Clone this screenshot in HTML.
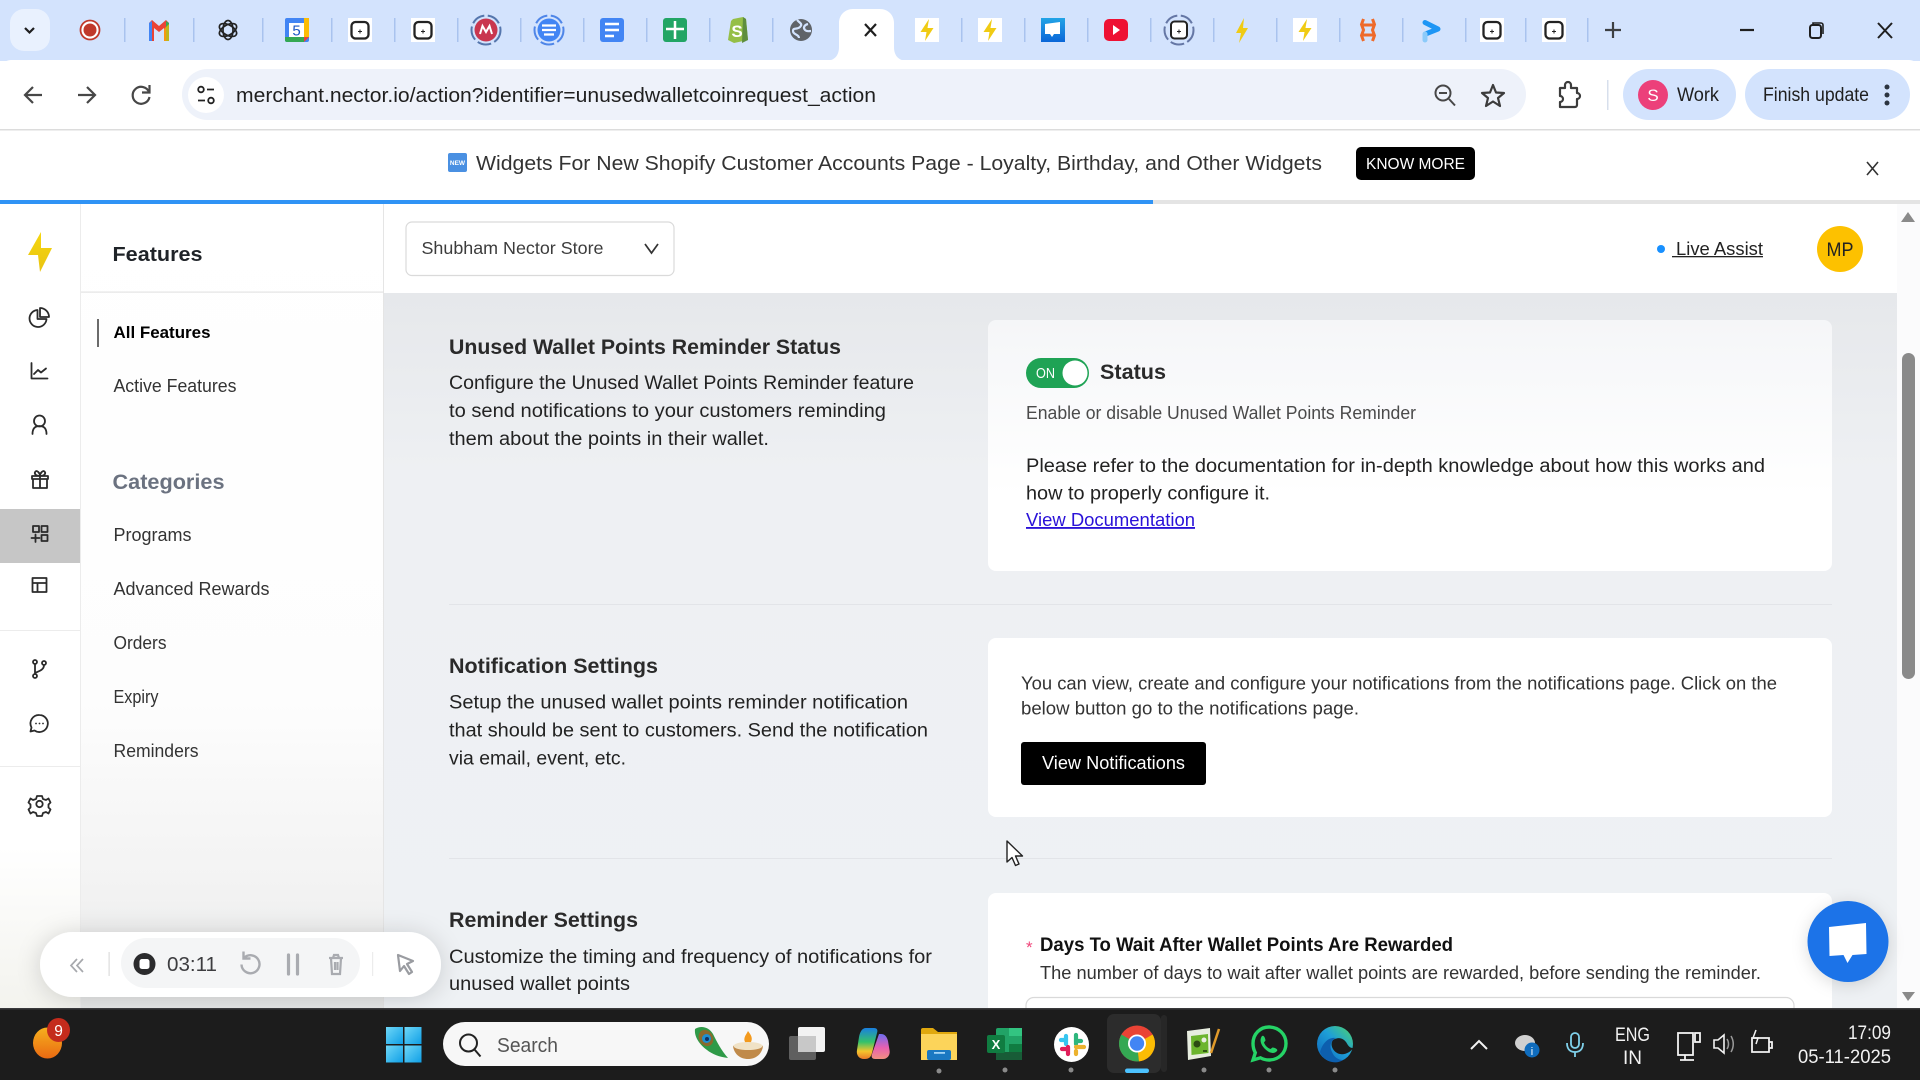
<!DOCTYPE html>
<html><head><meta charset="utf-8"><title>Nector</title>
<style>
html,body{margin:0;padding:0;width:1920px;height:1080px;overflow:hidden;background:#fff}
svg{display:block}
text{font-family:"Liberation Sans",sans-serif;white-space:pre}
.p{font-size:19px;fill:#222}
.h{font-size:21px;font-weight:700;fill:#2a2a2a}
.n{font-size:18px;fill:#333}
.l{font-size:18px;fill:#4a4a4a}
.ic{fill:none;stroke:#2b2b2b;stroke-width:1.8;stroke-linecap:round;stroke-linejoin:round}
.sep{fill:#a9c3ee}
.dot{fill:#8a8a8a}
</style></head><body>
<svg width="1920" height="1080" viewBox="0 0 1920 1080" xmlns="http://www.w3.org/2000/svg">
<defs>
<linearGradient id="mainBg" x1="0" y1="0" x2="0" y2="1"><stop offset="0" stop-color="#e6e8eb"/><stop offset=".25" stop-color="#eef0f3"/><stop offset="1" stop-color="#eef1f4"/></linearGradient>
<linearGradient id="cardBg" x1="0" y1="0" x2="0" y2="1"><stop offset="0" stop-color="#f5f6f8"/><stop offset=".7" stop-color="#fff"/></linearGradient>
<linearGradient id="panelBg" x1="0" y1="0" x2="0" y2="1"><stop offset="0" stop-color="#fff"/><stop offset=".62" stop-color="#fdfdfd"/><stop offset=".86" stop-color="#f2f2f2"/><stop offset="1" stop-color="#e6e7e7"/></linearGradient>
<linearGradient id="railBg" x1="0" y1="0" x2="0" y2="1"><stop offset="0" stop-color="#fff"/><stop offset=".8" stop-color="#fff"/><stop offset="1" stop-color="#f3f3ee"/></linearGradient>
<linearGradient id="bolt" x1="0" y1="0" x2="0" y2="1"><stop offset="0" stop-color="#f5d60f"/><stop offset="1" stop-color="#e9c412"/></linearGradient>
<linearGradient id="msg" x1="0" y1="0" x2="0" y2="1"><stop offset="0" stop-color="#23a4e6"/><stop offset="1" stop-color="#0a66d8"/></linearGradient>
<linearGradient id="win" x1="0" y1="0" x2="1" y2="1"><stop offset="0" stop-color="#6fd7f7"/><stop offset="1" stop-color="#0f9fe6"/></linearGradient>
<linearGradient id="org" x1="0" y1="0" x2="0" y2="1"><stop offset="0" stop-color="#f6b01e"/><stop offset="1" stop-color="#ea6a12"/></linearGradient>
<linearGradient id="copL" x1="0" y1="0" x2="0" y2="1"><stop offset="0" stop-color="#1a7fe0"/><stop offset=".45" stop-color="#34c26a"/><stop offset=".75" stop-color="#f5c52c"/><stop offset="1" stop-color="#ea7a2a"/></linearGradient>
<linearGradient id="copR" x1="0" y1="0" x2="0" y2="1"><stop offset="0" stop-color="#6c6cf0"/><stop offset=".55" stop-color="#e860b0"/><stop offset="1" stop-color="#f09080"/></linearGradient>
<linearGradient id="edge" x1="1" y1="0" x2="0" y2="1"><stop offset="0" stop-color="#4fd46a"/><stop offset=".45" stop-color="#1e9fd8"/><stop offset="1" stop-color="#0d62b8"/></linearGradient>
<filter id="sh" x="-20%" y="-40%" width="140%" height="180%"><feDropShadow dx="0" dy="2" stdDeviation="12" flood-color="#000" flood-opacity=".16"/></filter>
<filter id="sh2" x="-30%" y="-30%" width="160%" height="160%"><feDropShadow dx="0" dy="3" stdDeviation="8" flood-color="#000" flood-opacity=".14"/></filter>
<g id="tile"><rect x="-12" y="-12" width="24" height="24" fill="#fff"/><rect x="-8.500" y="-8" width="17" height="16.500" rx="4" fill="none" stroke="#222" stroke-width="2.300"/><path d="M-2 1.500H2M0-.5v4" stroke="#222" stroke-width="1"/></g>
<g id="boltT"><rect x="-12" y="-12" width="24" height="24" fill="#fff"/><path d="M2-11-6.500 2H-.5L-2 11 6.500-2H.5z" fill="#f0cb13"/></g>
</defs>

<!-- Tab strip -->
<rect width="1920" height="61" fill="#d3e3fd"/>
<rect x="10" y="9" width="40" height="42" rx="14" fill="#e9f1fe"/>
<path d="M25 28l4.500 4.500 4.500-4.500" fill="none" stroke="#1f1f1f" stroke-width="2.200"/>
<g class="sep">
<rect x="124" y="18" width="1.500" height="24"/><rect x="193" y="18" width="1.500" height="24"/><rect x="262" y="18" width="1.500" height="24"/><rect x="331" y="18" width="1.500" height="24"/><rect x="394" y="18" width="1.500" height="24"/><rect x="457" y="18" width="1.500" height="24"/><rect x="520" y="18" width="1.500" height="24"/><rect x="583" y="18" width="1.500" height="24"/><rect x="646" y="18" width="1.500" height="24"/><rect x="709" y="18" width="1.500" height="24"/><rect x="772" y="18" width="1.500" height="24"/>
<rect x="961" y="18" width="1.500" height="24"/><rect x="1024" y="18" width="1.500" height="24"/><rect x="1087" y="18" width="1.500" height="24"/><rect x="1150" y="18" width="1.500" height="24"/><rect x="1213" y="18" width="1.500" height="24"/><rect x="1276" y="18" width="1.500" height="24"/><rect x="1339" y="18" width="1.500" height="24"/><rect x="1402" y="18" width="1.500" height="24"/><rect x="1465" y="18" width="1.500" height="24"/><rect x="1525" y="18" width="1.500" height="24"/><rect x="1587" y="18" width="1.500" height="24"/>
</g>
<!-- record -->
<circle cx="90" cy="30" r="9.500" fill="#fff" stroke="#c0392b" stroke-width="1.800"/><circle cx="90" cy="30" r="6.500" fill="#c0392b"/>
<!-- gmail -->
<path d="M149 41V23l3-3 7 6 7-6 3 3v18h-5V28l-5 4-5-4v13z" fill="#ea4335"/><path d="M149 41V23l3-2v20z" fill="#4285f4"/><path d="M169 41V23l-3-2v20z" fill="#34a853"/><path d="M164 41V29l5-5v17z" fill="#fbbc04" opacity=".7"/>
<!-- chatgpt -->
<g fill="none" stroke="#222" stroke-width="1.700"><ellipse cx="228" cy="30" rx="5" ry="9.500"/><ellipse cx="228" cy="30" rx="5" ry="9.500" transform="rotate(60 228 30)"/><ellipse cx="228" cy="30" rx="5" ry="9.500" transform="rotate(120 228 30)"/></g>
<!-- calendar -->
<rect x="285" y="18" width="24" height="24" rx="2" fill="#4285f4"/><rect x="289" y="23" width="15" height="14" fill="#fff"/><path d="M304 18h5v19h-5z" fill="#fbbc04"/><path d="M285 37h19v5h-17a2 2 0 0 1-2-2z" fill="#34a853"/><path d="M304 37h5l-5 5z" fill="#ea4335"/><text x="296.500" y="35.500" font-size="15" text-anchor="middle" fill="#1a56c4">5</text>
<use href="#tile" x="360" y="30"/><use href="#tile" x="423" y="30"/>
<!-- record circle -->
<circle cx="486" cy="30" r="14.500" fill="none" stroke="#5576ad" stroke-width="2" stroke-dasharray="14 3.500"/><circle cx="486" cy="30" r="11.500" fill="#c9364f"/><path d="M480 34l2.500-8 3.500 6 3.500-6 2.500 8" fill="none" stroke="#fff" stroke-width="2"/>
<circle cx="549" cy="30" r="14.500" fill="none" stroke="#4f86e8" stroke-width="2" stroke-dasharray="14 3.500"/><circle cx="549" cy="30" r="11.500" fill="#4285f4"/><path d="M542 25.500h14M542 30h14M544 34.500h10" stroke="#fff" stroke-width="2.200"/>
<rect x="600" y="18" width="24" height="24" rx="3" fill="#4285f4"/><path d="M605 24h14M605 30h14M605 36h9" stroke="#fff" stroke-width="2.500"/>
<rect x="663" y="18" width="24" height="24" rx="3" fill="#22a565"/><path d="M666 29h18M675 21v18" stroke="#fff" stroke-width="2.500"/>
<path d="M733 19l10-2 3 2 2 21-14 3-6-3 3-19z" fill="#95bf47"/><path d="M743 17l3 2 2 21-6 3z" fill="#5e8e3e"/><text x="737" y="37" font-size="17" font-weight="700" fill="#fff" text-anchor="middle">S</text>
<circle cx="801" cy="30" r="11" fill="#5f6368"/><path d="M797 20c3 3 6 4 3 7s-7 0-7 4 6 3 6 7M808 24c-4 1-5 4-3 6s4 1 6 1" fill="none" stroke="#d3e3fd" stroke-width="2.200"/>
<!-- active tab -->
<path d="M825 61c8 0 14-4 14-14V23c0-8 6-14 14-14h27c8 0 14 6 14 14v24c0 10 6 14 14 14z" fill="#fff"/>
<path d="M865 24l11 12M876 24l-11 12" stroke="#1f1f1f" stroke-width="2.200"/>
<use href="#boltT" x="927" y="30"/><use href="#boltT" x="990" y="30"/>
<rect x="1041" y="18" width="24" height="24" fill="url(#msg)"/><path d="M1045 24l15-2v12h-6l-2 3-2-3h-5z" fill="#fff"/>
<rect x="1104" y="19" width="24" height="22" rx="5" fill="#ee1133"/><path d="M1113 25l7 5-7 5z" fill="#fff"/>
<circle cx="1179" cy="30" r="14.500" fill="none" stroke="#6577a5" stroke-width="2" stroke-dasharray="14 3.500"/><rect x="1171" y="21.500" width="16" height="17" rx="3.500" fill="#fff" stroke="#222" stroke-width="2"/><path d="M1177 31.500h4M1179 29.500v4" stroke="#222" stroke-width="1"/>
<path d="M1244 18l-8 15h5l-2 10 9-15h-5z" fill="#f0cb13"/>
<use href="#boltT" x="1305" y="30"/>
<g fill="none" stroke="#ee6a2a" stroke-width="3"><path d="M1363.500 19l-2 5.500 2 5.500-2 5.500 2 5.500M1372.500 19l2 5.500-2 5.500 2 5.500-2 5.500M1363 25h10M1363 35h10"/></g>
<path d="M1425 22.500l13 6.500-12.500 5" fill="none" stroke="#1e96f5" stroke-width="5" stroke-linecap="round" stroke-linejoin="round"/><path d="M1425 34v6" stroke="#8ccbfa" stroke-width="5" stroke-linecap="round"/>
<use href="#tile" x="1492" y="30"/><use href="#tile" x="1554" y="30"/>
<path d="M1605 30h16M1613 22v16" stroke="#3d4043" stroke-width="2.200"/>
<path d="M1740 30h14" stroke="#1f1f1f" stroke-width="2.200"/>
<rect x="1810" y="25" width="11" height="13" rx="2.500" fill="none" stroke="#1f1f1f" stroke-width="2"/><path d="M1813 24v-1h8a2 2 0 0 1 2 2v9" fill="none" stroke="#1f1f1f" stroke-width="1.600"/>
<path d="M1878 23l14 15M1892 23l-14 15" stroke="#1f1f1f" stroke-width="2"/>

<!-- Toolbar -->
<path d="M0 129V71a11 11 0 0 1 11-11h1898a11 11 0 0 1 11 11v58z" fill="#fff"/>
<rect y="129" width="1920" height="1.500" fill="#dcdcdc"/>
<path d="M42 95H26M33 87l-8 8 8 8" fill="none" stroke="#474747" stroke-width="2.200"/>
<path d="M78 95h16M87 87l8 8-8 8" fill="none" stroke="#474747" stroke-width="2.200"/>
<path d="M149 92a8.500 8.500 0 1 0 .5 5M149.500 85v7.500H142" fill="none" stroke="#474747" stroke-width="2.200"/>
<rect x="182" y="69" width="1344" height="51" rx="25.500" fill="#eef2fa"/>
<circle cx="206" cy="95" r="18" fill="#fff"/>
<g fill="none" stroke="#222" stroke-width="1.800"><circle cx="201" cy="89.500" r="2.800"/><path d="M207 89.500h7M198 100.500h7"/><circle cx="211" cy="100.500" r="2.800"/></g>
<text x="236" y="102" font-size="20" fill="#1f1f1f" textLength="640" lengthAdjust="spacingAndGlyphs">merchant.nector.io/action?identifier=unusedwalletcoinrequest_action</text>
<g fill="none" stroke="#474747" stroke-width="2"><circle cx="1443" cy="93" r="7.500"/><path d="M1449 99l6 6.500M1439 93h8"/></g>
<path d="M1493 85l3 7.500 8 .5-6 5 2 8-7-4.500-7 4.500 2-8-6-5 8-.5z" fill="none" stroke="#3c3c3c" stroke-width="2.200" stroke-linejoin="round"/>
<path d="M1560 88h5v-3a2.500 2.500 0 0 1 6 0v3h6v5a3 3 0 0 1 0 6v6a2 2 0 0 1-2 2h-15v-5a3 3 0 0 0 0-6v-7a1 1 0 0 1 0-1z" fill="none" stroke="#3c3c3c" stroke-width="2.200" stroke-linejoin="round"/>
<rect x="1607" y="80" width="1.500" height="30" fill="#d7dfec"/>
<rect x="1623" y="69" width="113" height="51" rx="25.500" fill="#d3e3fd"/>
<circle cx="1653" cy="95" r="15" fill="#ec407a"/><text x="1653" y="101" font-size="17" fill="#fff" text-anchor="middle">S</text>
<text x="1677" y="101" font-size="19" fill="#1f1f1f" textLength="42" lengthAdjust="spacingAndGlyphs">Work</text>
<rect x="1745" y="69" width="165" height="51" rx="25.500" fill="#d3e3fd"/>
<text x="1763" y="101" font-size="19" fill="#1f1f1f" textLength="106" lengthAdjust="spacingAndGlyphs">Finish update</text>
<g fill="#2c3440"><circle cx="1887" cy="87" r="2.500"/><circle cx="1887" cy="95" r="2.500"/><circle cx="1887" cy="103" r="2.500"/></g>

<!-- Banner -->
<rect y="130.500" width="1920" height="69.500" fill="#fff"/>
<rect x="448" y="153" width="19" height="19" rx="2" fill="#4a90e2"/><text x="457.500" y="165" font-size="6.500" font-weight="700" fill="#fff" text-anchor="middle">NEW</text>
<text x="476" y="170" font-size="20.500" fill="#333" textLength="846" lengthAdjust="spacingAndGlyphs">Widgets For New Shopify Customer Accounts Page - Loyalty, Birthday, and Other Widgets</text>
<rect x="1356" y="147" width="119" height="33" rx="5" fill="#000"/>
<text x="1366" y="169" font-size="16" fill="#fff" textLength="99" lengthAdjust="spacingAndGlyphs">KNOW MORE</text>
<path d="M1867 162l11 13M1878 162l-11 13" stroke="#333" stroke-width="1.600"/>
<rect y="200" width="1920" height="4" fill="#e4e4e4"/><rect y="200" width="1153" height="4" fill="#2f93f5"/>

<!-- Rail + panel -->
<rect y="204" width="81" height="804" fill="url(#railBg)"/>
<rect x="80" y="204" width="1" height="804" fill="#ececec"/>
<rect x="81" y="204" width="303" height="804" fill="url(#panelBg)"/>
<rect x="383" y="204" width="1" height="804" fill="#e5e5e5"/>
<rect x="81" y="291.500" width="303" height="1.200" fill="#e3e3e3"/>
<path d="M41 232l-13 23h10l2 17 12-24H41z" fill="url(#bolt)"/>
<rect y="509" width="80" height="54" fill="#c6c6c6"/>
<rect y="630" width="80" height="1" fill="#ececec"/><rect y="766" width="80" height="1" fill="#ececec"/>
<g class="ic">
<path d="M46.500 319a8.500 8.500 0 1 1-9-9v9z"/><path d="M40 308a9 9 0 0 1 9 9h-9z"/>
<path d="M31.500 363v15.500h16M34 374l4-4 3 2.500 5-4"/>
<circle cx="39.500" cy="421" r="5.500"/><path d="M32.500 434c0-6 3-8 7-8s7 2 7 8"/>
<path d="M32 476h16v3H32zM33 479v9h14v-9M40 476v12M40 476c-5 0-6-3-4.500-4.500S40 473 40 476c0-3 3-6 4.500-4.500S45 476 40 476"/>
<path d="M33 526h6v6h-6zM41.500 526h6v6h-6zM41.500 535h6v6h-6zM31.500 538h8M35.500 534.500v7.500"/>
<path d="M32.500 578h14v14h-14zM32.500 583h14M37.500 583v9"/>
<circle cx="35" cy="662" r="2"/><circle cx="35" cy="676" r="2"/><circle cx="44" cy="663" r="2"/><path d="M35 664v10M44 665c0 5-5 6-9 8"/>
<path d="M39.500 715a8.500 8.500 0 1 1-5 15.500l-4 1 1-4a8.500 8.500 0 0 1 8-12.500z"/><path d="M36 723.500h.01M39.500 723.500h.01M43 723.500h.01"/>
<path d="M37 796l5 0 1 3 3 1 2.500-1.500 2 4-2 2v3l2 2-2 4-2.500-1.500-3 1-1 3h-5l-1-3-3-1-2.500 1.500-2-4 2-2v-3l-2-2 2-4 2.500 1.500 3-1z"/><circle cx="39.500" cy="804" r="3.200"/>
</g>
<text x="112.500" y="261" font-size="20.500" font-weight="700" fill="#1f2328" textLength="90" lengthAdjust="spacingAndGlyphs">Features</text>
<rect x="97" y="319" width="2" height="28" fill="#6b6b6b"/>
<text x="113.500" y="338" font-size="17" font-weight="700" fill="#000" textLength="97" lengthAdjust="spacingAndGlyphs">All Features</text>
<text class="n" x="113.500" y="392" textLength="123" lengthAdjust="spacingAndGlyphs">Active Features</text>
<text x="112.500" y="489" font-size="21" font-weight="700" fill="#6b7280" textLength="112" lengthAdjust="spacingAndGlyphs">Categories</text>
<text class="n" x="113.500" y="541" textLength="78" lengthAdjust="spacingAndGlyphs">Programs</text>
<text class="n" x="113.500" y="595" textLength="156" lengthAdjust="spacingAndGlyphs">Advanced Rewards</text>
<text class="n" x="113.500" y="649" textLength="53" lengthAdjust="spacingAndGlyphs">Orders</text>
<text class="n" x="113.500" y="703" textLength="45" lengthAdjust="spacingAndGlyphs">Expiry</text>
<text class="n" x="113.500" y="757" textLength="85" lengthAdjust="spacingAndGlyphs">Reminders</text>

<!-- Top header -->
<rect x="384" y="204" width="1536" height="89" fill="#fff"/>
<rect x="406" y="222" width="268" height="53.500" rx="6" fill="#fff" stroke="#dadada" stroke-width="1.200"/>
<text x="421.500" y="254" font-size="17.500" fill="#3c3c3c" textLength="182" lengthAdjust="spacingAndGlyphs">Shubham Nector Store</text>
<path d="M645 244l6.500 9 6.500-9" fill="none" stroke="#333" stroke-width="1.700"/>
<circle cx="1661" cy="249" r="4" fill="#1890ff"/>
<text x="1676" y="255" font-size="18.500" fill="#222" textLength="87" lengthAdjust="spacingAndGlyphs">Live Assist</text>
<rect x="1672" y="256" width="91" height="1.300" fill="#222"/>
<circle cx="1840" cy="249" r="23" fill="#fdc100"/><text x="1840" y="256" font-size="19.500" fill="#222" text-anchor="middle" textLength="27" lengthAdjust="spacingAndGlyphs">MP</text>

<!-- Main -->
<rect x="384" y="293" width="1513" height="715" fill="url(#mainBg)"/>
<rect x="1897" y="204" width="23" height="804" fill="#fbfbfc"/>
<path d="M1908 212l7 10h-14z" fill="#8a8a8a"/><path d="M1908 1001l-6-9h13z" fill="#8a8a8a"/>
<rect x="1902" y="353" width="13" height="326" rx="6.500" fill="#8a8a8a"/>

<text class="h" x="449" y="354" textLength="392" lengthAdjust="spacingAndGlyphs">Unused Wallet Points Reminder Status</text>
<text class="p" x="449" y="389" textLength="465" lengthAdjust="spacingAndGlyphs">Configure the Unused Wallet Points Reminder feature</text>
<text class="p" x="449" y="417" textLength="437" lengthAdjust="spacingAndGlyphs">to send notifications to your customers reminding</text>
<text class="p" x="449" y="445" textLength="320" lengthAdjust="spacingAndGlyphs">them about the points in their wallet.</text>

<rect x="988" y="320" width="844" height="251" rx="8" fill="url(#cardBg)"/>
<rect x="1026" y="358" width="63" height="30" rx="15" fill="#1fa355"/><circle cx="1075" cy="373" r="12.500" fill="#fff"/>
<text x="1036" y="378" font-size="15" fill="#fff" textLength="19" lengthAdjust="spacingAndGlyphs">ON</text>
<text x="1100" y="379" font-size="21.500" font-weight="700" fill="#2a2a2a" textLength="66" lengthAdjust="spacingAndGlyphs">Status</text>
<text class="l" x="1026" y="419" textLength="390" lengthAdjust="spacingAndGlyphs">Enable or disable Unused Wallet Points Reminder</text>
<text class="p" x="1026" y="472" fill="#111" textLength="739" lengthAdjust="spacingAndGlyphs">Please refer to the documentation for in-depth knowledge about how this works and</text>
<text class="p" x="1026" y="499.500" textLength="244" lengthAdjust="spacingAndGlyphs">how to properly configure it.</text>
<text x="1026" y="526" font-size="18.500" fill="#2a12d8" text-decoration="underline" textLength="169" lengthAdjust="spacingAndGlyphs">View Documentation</text>

<rect x="449" y="604" width="1383" height="1" fill="#e2e4e8"/>

<text class="h" x="449" y="673" textLength="209" lengthAdjust="spacingAndGlyphs">Notification Settings</text>
<text class="p" x="449" y="708.500" textLength="459" lengthAdjust="spacingAndGlyphs">Setup the unused wallet points reminder notification</text>
<text class="p" x="449" y="736.500" textLength="479" lengthAdjust="spacingAndGlyphs">that should be sent to customers. Send the notification</text>
<text class="p" x="449" y="764.500" textLength="177" lengthAdjust="spacingAndGlyphs">via email, event, etc.</text>

<rect x="988" y="638" width="844" height="179" rx="8" fill="#fff"/>
<text class="n" x="1021" y="689.500" textLength="756" lengthAdjust="spacingAndGlyphs">You can view, create and configure your notifications from the notifications page. Click on the</text>
<text class="n" x="1021" y="714.500" textLength="338" lengthAdjust="spacingAndGlyphs">below button go to the notifications page.</text>
<rect x="1021" y="742" width="185" height="43" rx="3" fill="#000"/>
<text x="1042" y="769" font-size="18.500" fill="#fff" textLength="143" lengthAdjust="spacingAndGlyphs">View Notifications</text>

<rect x="449" y="858" width="1383" height="1" fill="#e2e4e8"/>
<path d="M1007 841v21l5-4.500 3.500 8 3.500-1.500-3.500-8h7z" fill="#fff" stroke="#222" stroke-width="1.400" stroke-linejoin="round"/>

<text class="h" x="449" y="927" textLength="189" lengthAdjust="spacingAndGlyphs">Reminder Settings</text>
<text class="p" x="449" y="963" textLength="483" lengthAdjust="spacingAndGlyphs">Customize the timing and frequency of notifications for</text>
<text class="p" x="449" y="990" textLength="181" lengthAdjust="spacingAndGlyphs">unused wallet points</text>

<rect x="988" y="893" width="844" height="130" rx="8" fill="#fff"/>
<text x="1026" y="953" font-size="17" fill="#f0457a">*</text>
<text x="1040" y="951" font-size="19" font-weight="700" fill="#111" textLength="413" lengthAdjust="spacingAndGlyphs">Days To Wait After Wallet Points Are Rewarded</text>
<text class="n" x="1040" y="979" fill="#333" textLength="721" lengthAdjust="spacingAndGlyphs">The number of days to wait after wallet points are rewarded, before sending the reminder.</text>
<rect x="1026" y="997.500" width="768" height="30" rx="8" fill="#fff" stroke="#d9d9d9" stroke-width="1.200"/>

<!-- chat -->
<ellipse cx="1848" cy="941.500" rx="40.500" ry="40.500" fill="#1a73e8" filter="url(#sh2)"/>
<path d="M1829 927l37-4 .5 31-14 1-5 8-4-8-14 1z" fill="#fff"/>

<!-- Recorder -->
<rect x="40" y="932" width="401" height="65" rx="32.500" fill="#fff" filter="url(#sh)"/>
<rect x="121" y="938" width="239" height="50" rx="25" fill="#f4f5f6"/>
<path d="M77 959l-6 6.500 6 6.500M83 959l-6 6.500 6 6.500" fill="none" stroke="#a7a9ad" stroke-width="1.700"/>
<rect x="108.500" y="952" width="1.200" height="24" fill="#dcdcdc"/><rect x="372" y="952" width="1.200" height="24" fill="#ececec"/>
<circle cx="144.500" cy="964" r="11" fill="#2b2b2d"/><rect x="139.500" y="959" width="10" height="10" rx="2.500" fill="#fff"/>
<text x="167" y="971" font-size="20" fill="#3d3d40" textLength="50" lengthAdjust="spacingAndGlyphs">03:11</text>
<path d="M244 958a9 9 0 1 1-2.500 6.500M243.500 951.500v7h7" fill="none" stroke="#a9abb0" stroke-width="2.400"/>
<path d="M288.500 955v19M297.500 955v19" stroke="#a9abb0" stroke-width="3.200" stroke-linecap="round"/>
<path d="M329 958h14M333 958l1-3h4l1 3M331 958l1 16h8l1-16M335 962v8M337.500 962v8" fill="none" stroke="#a9abb0" stroke-width="2.200"/>
<path d="M398 955l15 6-6 3 5 8-3 2-5-8-4 5z" fill="none" stroke="#9a9ca1" stroke-width="2.200" stroke-linejoin="round"/>

<!-- Taskbar -->
<rect y="1008" width="1920" height="72" fill="#1c1c1c"/><rect y="1008" width="1920" height="1.500" fill="#3a3a3c"/>
<ellipse cx="47.500" cy="1043" rx="14.500" ry="15.500" fill="url(#org)"/>
<ellipse cx="58.500" cy="1030" rx="11.500" ry="12" fill="#c42b1c"/><text x="58.500" y="1036" font-size="15.500" fill="#fff" text-anchor="middle">9</text>
<g fill="url(#win)"><rect x="386" y="1027" width="17" height="17"/><rect x="404.500" y="1027" width="17" height="17"/><rect x="386" y="1045.500" width="17" height="17"/><rect x="404.500" y="1045.500" width="17" height="17"/></g>
<rect x="443" y="1022" width="326" height="44" rx="22" fill="#f7f7f7"/>
<circle cx="468.500" cy="1043" r="8.500" fill="none" stroke="#222" stroke-width="2"/><path d="M474.500 1049.500l6 7" stroke="#222" stroke-width="2"/>
<text x="497" y="1052" font-size="20" fill="#555" textLength="61" lengthAdjust="spacingAndGlyphs">Search</text>
<!-- peacock feather -->
<path d="M695 1029c6-4 14-2 18 5 4 8 8 16 15 24-9-1-16-4-21-8-7-5-13-13-12-21z" fill="#2f9a48"/><ellipse cx="706" cy="1038" rx="7" ry="8.500" fill="#8a6a2c" transform="rotate(-30 706 1038)"/><circle cx="706.500" cy="1038.500" r="4.500" fill="#1f8fd0"/><circle cx="707" cy="1039" r="2" fill="#12305e"/>
<!-- diya -->
<path d="M748 1031c3 4 5 7 3 11-1 2-5 2-6 0-2-4 1-7 3-11z" fill="#f39a1e"/><path d="M733 1046c4-3 26-3 30 0-1 8-7 13-15 13s-14-5-15-13z" fill="#c08a4a"/><ellipse cx="748" cy="1046" rx="14.500" ry="4" fill="#f0e2c6"/>
<!-- task view -->
<rect x="798" y="1027" width="27" height="25" rx="2" fill="#f2f2f2"/><rect x="789" y="1036" width="27" height="24" rx="2" fill="#5f5f5f"/><rect x="798" y="1036" width="18" height="16" fill="#c8c8c8"/>
<!-- copilot -->
<path d="M879 1034h2c4 0 6 3 7 7l1.500 9c1 5-2 9-6.500 9h-8c-3 0-4-2-3-5z" fill="url(#copR)"/>
<path d="M866 1028h8c3 0 4 2 3 5l-5 20c-1 4-3 6-7 6h-1c-5 0-8-4-7-9l2-13c1-5 3-9 7-9z" fill="url(#copL)"/>
<!-- explorer -->
<path d="M921 1030a2 2 0 0 1 2-2h10l5 4h19v8h-36z" fill="#e0a80e"/><path d="M921 1034h36v26h-36z" fill="#fcd45a"/><rect x="927" y="1050" width="24" height="10" rx="2" fill="#1a78c2"/><rect x="934" y="1052" width="11" height="1.800" fill="#9fd3f6"/>
<circle cx="939" cy="1071" r="2.500" class="dot"/>
<rect x="996" y="1028" width="26" height="32" rx="2" fill="#21a366"/><rect x="1009" y="1028" width="13" height="8" fill="#33c481"/><rect x="1009" y="1044" width="13" height="8" fill="#107c41"/><rect x="996" y="1052" width="26" height="8" fill="#185c37"/>
<rect x="987" y="1035" width="18" height="18" rx="2" fill="#107c41"/><text x="996" y="1049" font-size="13" font-weight="700" fill="#fff" text-anchor="middle">X</text>
<circle cx="1005" cy="1070" r="2.500" class="dot"/>
<circle cx="1071.500" cy="1044.500" r="17.500" fill="#fff"/>
<g stroke-width="4.200" stroke-linecap="round"><path d="M1066 1036v8" stroke="#36c5f0"/><path d="M1061 1040h5" stroke="#36c5f0"/><path d="M1076 1035v9" stroke="#2eb67d"/><path d="M1081 1041h-5" stroke="#2eb67d"/><path d="M1068 1054v-7" stroke="#e01e5a"/><path d="M1062 1049h6" stroke="#e01e5a"/><path d="M1076 1047h8" stroke="#ecb22e"/><path d="M1076 1054v-3" stroke="#ecb22e"/></g>
<circle cx="1071" cy="1070" r="2.500" class="dot"/>
<!-- chrome -->
<rect x="1107" y="1014" width="54" height="59" rx="7" fill="#2c2c2c"/><rect x="1161" y="1015" width="6" height="57" rx="3" fill="#272727"/>
<circle cx="1137" cy="1043.500" r="18" fill="#ea4335"/>
<path d="M1137 1043.500L1121.400 1034.500A18 18 0 0 0 1139 1061.400z" fill="#34a853"/>
<path d="M1137 1043.500L1152.600 1034.500A18 18 0 0 1 1139 1061.400z" fill="#fbbc04"/>
<circle cx="1137" cy="1043.500" r="9" fill="#fff"/><circle cx="1137" cy="1043.500" r="7.200" fill="#4285f4"/>
<rect x="1125" y="1068.500" width="24" height="4.500" rx="2.200" fill="#4cc2ff"/>
<!-- notepad++ -->
<path d="M1187 1031l23-3 1 28-23 4z" fill="#e8eee0"/><path d="M1191 1036l17-2 .5 19-17 2z" fill="#6cb52e"/><circle cx="1197" cy="1044" r="3.500" fill="#2c4a14"/><circle cx="1204" cy="1040" r="2.500" fill="#e8eee0"/><path d="M1203 1051h4" stroke="#1c3a0c" stroke-width="1.500"/><path d="M1211 1053l8-24" stroke="#e09a2a" stroke-width="2.500"/>
<circle cx="1204" cy="1070" r="2.500" class="dot"/>
<!-- whatsapp -->
<path d="M1269 1027c9.500 0 17 7 17 16.500s-7.500 16.500-17 16.500c-3 0-6-.8-8.500-2.200l-7.500 2.200 2.300-7.300c-1.500-2.700-2.300-5.900-2.300-9.200 0-9.500 7-16.500 16-16.500z" fill="none" stroke="#25d366" stroke-width="3.400"/>
<path d="M1262 1036c2-1.500 3.500 3 3.500 4.500l-1.500 2c1 3 3.500 5.500 6.500 6.500l2-1.500c1.500 0 6 1.500 4.500 3.500-3 3.500-8 2-12-2s-6-9-3-13z" fill="#25d366"/>
<circle cx="1269" cy="1070" r="2.500" class="dot"/>
<!-- edge -->
<circle cx="1335" cy="1044" r="18" fill="url(#edge)"/>
<path d="M1333 1040c6-4 11-1 13 2 2 3 3 6 7 6-2 4-8 7-13 6-6-1-11-9-7-14z" fill="#1c1c1c"/><path d="M1320 1052c3-10 9-15 16-14-5 2-7 8-4 14 2 5 6 8 11 8-3 2-7 3-11 2-6-1-10-5-12-10z" fill="#0d5fae"/>
<circle cx="1335" cy="1070" r="2.500" class="dot"/>

<path d="M1471 1049l8-8 8 8" fill="none" stroke="#f2f2f2" stroke-width="2"/>
<ellipse cx="1525" cy="1043" rx="10" ry="8" fill="#d0d0d0"/><circle cx="1532" cy="1050" r="7.500" fill="#0f6cbd"/><text x="1532" y="1055" font-size="11" fill="#fff" text-anchor="middle">i</text>
<rect x="1571" y="1033" width="8" height="15" rx="4" fill="none" stroke="#7fd0ea" stroke-width="1.800"/><path d="M1567 1043c0 6 3 9 8 9s8-3 8-9M1575 1052v5" fill="none" stroke="#7fd0ea" stroke-width="1.800"/>
<text x="1632.500" y="1041" font-size="19" fill="#f2f2f2" text-anchor="middle" textLength="35" lengthAdjust="spacingAndGlyphs">ENG</text>
<text x="1632.500" y="1064" font-size="19" fill="#f2f2f2" text-anchor="middle" textLength="19" lengthAdjust="spacingAndGlyphs">IN</text>
<g fill="none" stroke="#f2f2f2" stroke-width="1.800"><rect x="1678" y="1033" width="15" height="22"/><rect x="1695" y="1033" width="5" height="9"/><path d="M1685 1055v5M1680 1060h14"/></g>
<path d="M1714 1040h4l6-5v18l-6-5h-4z" fill="none" stroke="#f2f2f2" stroke-width="1.600"/><path d="M1727 1039c2 3 2 7 0 10M1731 1036c3 5 3 11 0 16" fill="none" stroke="#9a9a9a" stroke-width="1.500"/>
<path d="M1752 1038h17v14h-17zM1769 1042h3v6h-3" fill="none" stroke="#f2f2f2" stroke-width="1.800"/><path d="M1756 1030l-3 8h5l-2 6" fill="none" stroke="#f2f2f2" stroke-width="1.500"/>
<text x="1891" y="1039" font-size="19.500" fill="#f2f2f2" text-anchor="end" textLength="43" lengthAdjust="spacingAndGlyphs">17:09</text>
<text x="1891" y="1063" font-size="19.500" fill="#f2f2f2" text-anchor="end" textLength="93" lengthAdjust="spacingAndGlyphs">05-11-2025</text>
</svg>
</body></html>
